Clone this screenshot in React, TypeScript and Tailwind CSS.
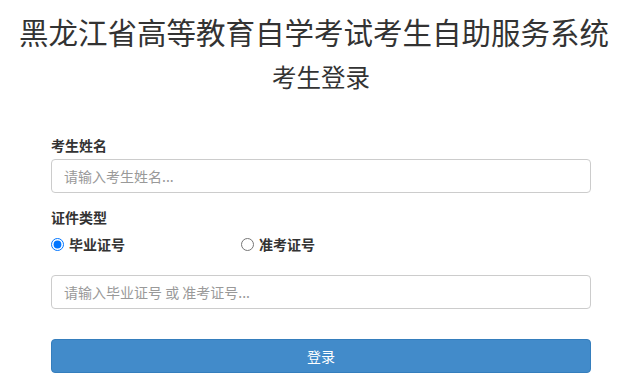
import React, { useState } from 'react';

const font = { fontFamily: '"Noto Sans CJK SC", "Noto Sans", sans-serif' };

const App: React.FC = () => {
  const [certType, setCertType] = useState('graduate');
  const [name, setName] = useState('');
  const [certNo, setCertNo] = useState('');

  return (
    <div className="min-h-[377px] w-[622px] bg-white text-[#333]" style={font}>
      {/* 标题 */}
      <div className="pt-[11px] pl-[6px] text-center">
        <h1 className="text-[29.5px] leading-[40px] font-normal whitespace-nowrap">
          黑龙江省高等教育自学考试考生自助服务系统
        </h1>
      </div>

      <div className="ml-[51px] w-[540px]">
        <h2 className="mt-[10px] text-center text-[24.5px] leading-[32px] font-normal">考生登录</h2>

        <form onSubmit={(e) => e.preventDefault()} className="mt-[42px]">
          {/* 考生姓名 */}
          <label htmlFor="name" className="block text-[14px] leading-[20px] font-bold">
            考生姓名
          </label>
          <input
            id="name"
            type="text"
            value={name}
            onChange={(e) => setName(e.target.value)}
            placeholder="请输入考生姓名..."
            className="mt-[4px] block h-[34px] w-full rounded-[4px] border border-[#ccc] px-[12px] text-[14px] placeholder:text-[#999] focus:outline-none"
          />

          {/* 证件类型 */}
          <div className="mt-[14px] text-[14px] leading-[20px] font-bold">证件类型</div>
          <div className="mt-[7px] flex items-center text-[14px] leading-[20px] font-bold">
            <label className="flex w-[190px] items-center gap-[5px]">
              <input
                type="radio"
                name="certType"
                checked={certType === 'graduate'}
                onChange={() => setCertType('graduate')}
                className="m-0 h-[13px] w-[13px] accent-[#0075ff]"
              />
              毕业证号
            </label>
            <label className="flex items-center gap-[5px]">
              <input
                type="radio"
                name="certType"
                checked={certType === 'exam'}
                onChange={() => setCertType('exam')}
                className="m-0 h-[13px] w-[13px]"
              />
              准考证号
            </label>
          </div>

          <input
            type="text"
            value={certNo}
            onChange={(e) => setCertNo(e.target.value)}
            placeholder="请输入毕业证号 或 准考证号..."
            className="mt-[21px] block h-[34px] w-full rounded-[4px] border border-[#ccc] px-[12px] text-[14px] placeholder:text-[#999] focus:outline-none"
          />

          <button
            type="submit"
            className="mt-[30px] block h-[34px] w-full rounded-[4px] border border-[#357ebd] bg-[#428bca] text-[14px] text-white"
          >
            登录
          </button>
        </form>
      </div>
    </div>
  );
};

export default App;
